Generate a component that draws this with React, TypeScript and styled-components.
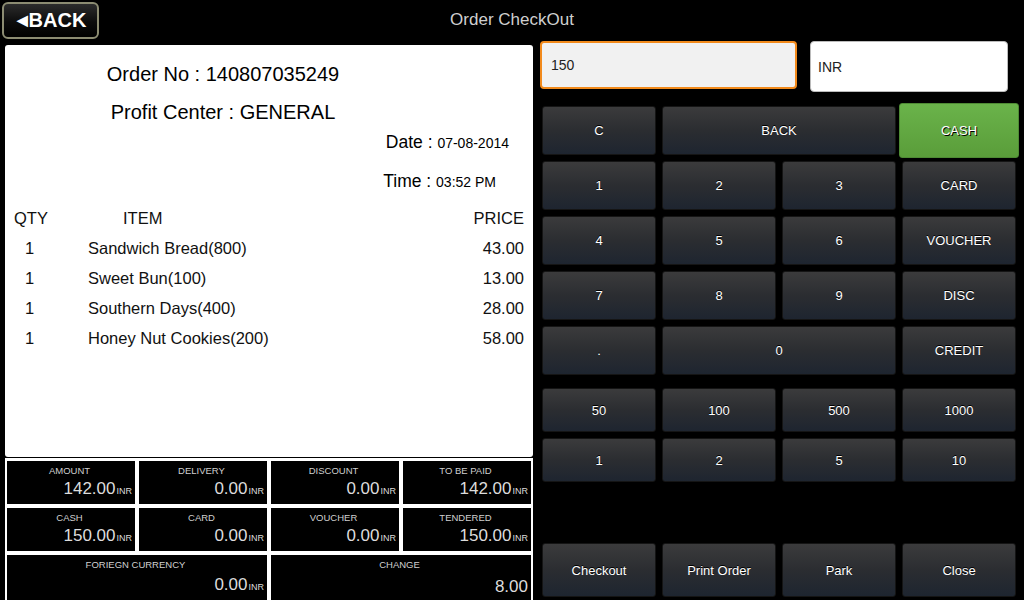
import styled, { createGlobalStyle } from 'styled-components'

const GlobalStyle = createGlobalStyle`
    html, body {
        margin: 0;
        padding: 0;
        background: #000;
    }
    body {
        font-family: "Liberation Sans", Arial, sans-serif;
    }
`

type Item = { qty: number; name: string; price: string }

const items: Item[] = [
    { qty: 1, name: 'Sandwich Bread(800)', price: '43.00' },
    { qty: 1, name: 'Sweet Bun(100)', price: '13.00' },
    { qty: 1, name: 'Southern Days(400)', price: '28.00' },
    { qty: 1, name: 'Honey Nut Cookies(200)', price: '58.00' },
]

type Total = { label: string; value: string; unit?: string; wide?: boolean }

const totals: Total[] = [
    { label: 'AMOUNT', value: '142.00', unit: 'INR' },
    { label: 'DELIVERY', value: '0.00', unit: 'INR' },
    { label: 'DISCOUNT', value: '0.00', unit: 'INR' },
    { label: 'TO BE PAID', value: '142.00', unit: 'INR' },
    { label: 'CASH', value: '150.00', unit: 'INR' },
    { label: 'CARD', value: '0.00', unit: 'INR' },
    { label: 'VOUCHER', value: '0.00', unit: 'INR' },
    { label: 'TENDERED', value: '150.00', unit: 'INR' },
    { label: 'FORIEGN CURRENCY', value: '0.00', unit: 'INR', wide: true },
    { label: 'CHANGE', value: '8.00', wide: true },
]

type Key = { label: string; span?: number; green?: boolean }

const keys: Key[] = [
    { label: 'C' },
    { label: 'BACK', span: 2 },
    { label: 'CASH', green: true },
    { label: '1' },
    { label: '2' },
    { label: '3' },
    { label: 'CARD' },
    { label: '4' },
    { label: '5' },
    { label: '6' },
    { label: 'VOUCHER' },
    { label: '7' },
    { label: '8' },
    { label: '9' },
    { label: 'DISC' },
    { label: '.' },
    { label: '0', span: 2 },
    { label: 'CREDIT' },
]

const quick = ['50', '100', '500', '1000', '1', '2', '5', '10']
const actions = ['Checkout', 'Print Order', 'Park', 'Close']

function App() {
    return (
        <Screen>
            <GlobalStyle />
            <Header>
                <BackButton>
                    <span className="arrow">◀</span>BACK
                </BackButton>
                <Title>Order CheckOut</Title>
                <div />
            </Header>
            <Main>
                <LeftColumn>
                    <Receipt>
                        <Heading>Order No : 140807035249</Heading>
                        <Heading>Profit Center : GENERAL</Heading>
                        <MetaLine right={24}>
                            Date : <small>07-08-2014</small>
                        </MetaLine>
                        <MetaLine right={37}>
                            Time : <small>03:52 PM</small>
                        </MetaLine>
                        <ItemTable>
                            <ItemRow header>
                                <span>QTY</span>
                                <span>ITEM</span>
                                <span>PRICE</span>
                            </ItemRow>
                            {items.map((it) => (
                                <ItemRow key={it.name}>
                                    <span>{it.qty}</span>
                                    <span>{it.name}</span>
                                    <span>{it.price}</span>
                                </ItemRow>
                            ))}
                        </ItemTable>
                    </Receipt>
                    <Totals>
                        {totals.map((t) => (
                            <TotalCell key={t.label} wide={t.wide}>
                                <TotalLabel>{t.label}</TotalLabel>
                                <TotalValue>
                                    {t.value}
                                    {t.unit && <small>{t.unit}</small>}
                                </TotalValue>
                            </TotalCell>
                        ))}
                    </Totals>
                </LeftColumn>
                <RightColumn>
                    <InputRow>
                        <AmountInput>150</AmountInput>
                        <CurrencyInput>INR</CurrencyInput>
                    </InputRow>
                    <KeyGrid rowHeight={49}>
                        {keys.map((k, i) => (
                            <PadButton key={i} span={k.span} green={k.green}>
                                {k.label}
                            </PadButton>
                        ))}
                    </KeyGrid>
                    <QuickGrid rowHeight={44}>
                        {quick.map((q, i) => (
                            <PadButton key={i}>{q}</PadButton>
                        ))}
                    </QuickGrid>
                    <ActionGrid rowHeight={54}>
                        {actions.map((a) => (
                            <PadButton key={a}>{a}</PadButton>
                        ))}
                    </ActionGrid>
                </RightColumn>
            </Main>
        </Screen>
    )
}

const Screen = styled.div`
    width: 1024px;
    height: 600px;
    background: #000;
    display: flex;
    flex-direction: column;
    overflow: hidden;
`

const Header = styled.div`
    height: 40px;
    display: grid;
    grid-template-columns: 1fr auto 1fr;
    align-items: center;
`

const BackButton = styled.button`
    justify-self: start;
    margin-left: 2px;
    width: 97px;
    height: 37px;
    border: 2px solid #8c8c72;
    border-radius: 6px;
    background: linear-gradient(#2c2c2c, #0c0c0c 55%, #000);
    color: #fff;
    font-family: "Liberation Sans", Arial, sans-serif;
    font-weight: bold;
    font-size: 20px;
    padding: 0 0 0 2px;
    display: flex;
    align-items: center;
    justify-content: center;
    .arrow {
        font-size: 14px;
        margin-right: 1px;
    }
`

const Title = styled.div`
    color: #cfcfcf;
    font-size: 17px;
`

const Main = styled.div`
    flex: 1;
    display: flex;
`

const LeftColumn = styled.div`
    width: 528px;
    margin-left: 5px;
    padding-top: 5px;
    display: flex;
    flex-direction: column;
`

const Receipt = styled.div`
    height: 412px;
    background: #fff;
    border-radius: 3px;
    color: #000;
    display: flex;
    flex-direction: column;
    box-sizing: border-box;
    padding-top: 17px;
`

const Heading = styled.div`
    font-size: 20px;
    text-align: center;
    width: 436px;
    line-height: 24px;
    margin-bottom: 14px;
`

const MetaLine = styled.div<{ right: number }>`
    align-self: flex-end;
    margin-right: ${(p) => p.right}px;
    font-size: 17.5px;
    line-height: 20px;
    margin-top: -6px;
    margin-bottom: 24px;
    small {
        font-size: 14px;
    }
`

const ItemTable = styled.div`
    margin-top: -13px;
    display: flex;
    flex-direction: column;
`

const ItemRow = styled.div<{ header?: boolean }>`
    display: grid;
    grid-template-columns: ${(p) => (p.header ? '109px 1fr auto' : '63px 1fr auto')};
    padding: 0 9px 0 ${(p) => (p.header ? 9 : 20)}px;
    font-size: 16.5px;
    height: 30px;
    line-height: 30px;
    color: #111;
`

const Totals = styled.div`
    margin-top: 1px;
    flex: 1;
    background: #fff;
    padding: 3px 2px 0;
    display: grid;
    grid-template-columns: repeat(4, 1fr);
    grid-template-rows: 43px 43px 45px;
    gap: 4px;
`

const TotalCell = styled.div<{ wide?: boolean }>`
    grid-column: ${(p) => (p.wide ? 'span 2' : 'span 1')};
    background: #000;
    display: flex;
    flex-direction: column;
    justify-content: space-between;
    padding: 4px 3px 4px 0;
    color: #dcdcdc;
`

const TotalLabel = styled.div`
    font-size: 9.5px;
    text-align: center;
    color: #d0d0d0;
`

const TotalValue = styled.div`
    text-align: right;
    font-size: 17px;
    line-height: 18px;
    small {
        font-size: 9px;
        margin-left: 1px;
    }
`

const RightColumn = styled.div`
    flex: 1;
    margin-left: 7px;
    display: flex;
    flex-direction: column;
    padding-top: 1px;
`

const InputRow = styled.div`
    display: flex;
    gap: 13px;
    height: 50px;
`

const AmountInput = styled.div`
    width: 257px;
    height: 48px;
    box-sizing: border-box;
    border: 2px solid #f28a1c;
    border-radius: 4px;
    background: #f1f1f1;
    font-size: 14px;
    color: #222;
    padding-left: 9px;
    display: flex;
    align-items: center;
`

const CurrencyInput = styled.div`
    width: 198px;
    height: 51px;
    box-sizing: border-box;
    border: 1px solid #bbb;
    border-radius: 4px;
    background: #fff;
    font-size: 14px;
    color: #222;
    padding-left: 7px;
    display: flex;
    align-items: center;
`

const KeyGrid = styled.div<{ rowHeight: number }>`
    margin-top: 15px;
    margin-left: 2px;
    display: grid;
    grid-template-columns: repeat(4, 114px);
    grid-auto-rows: ${(p) => p.rowHeight}px;
    gap: 6px;
`

const QuickGrid = styled(KeyGrid)`
    margin-top: 13px;
`

const ActionGrid = styled(KeyGrid)`
    margin-top: auto;
    margin-bottom: 3px;
`

const PadButton = styled.button<{ span?: number; green?: boolean }>`
    grid-column: span ${(p) => p.span ?? 1};
    border: 1px solid ${(p) => (p.green ? '#4e8a34' : '#151515')};
    border-radius: 3px;
    margin: ${(p) => (p.green ? '-3px' : '0')};
    background: ${(p) =>
        p.green
            ? 'linear-gradient(#6ab34a, #5a9d3a)'
            : 'linear-gradient(#3b3b3c, #2b2d31 50%, #1e2530)'};
    color: #fff;
    font-family: "Liberation Sans", Arial, sans-serif;
    font-size: 13px;
    text-shadow: ${(p) => (p.green ? '1px 1px 0 #000' : '0 -1px 0 #000')};
    padding: 0;
`

export default App
